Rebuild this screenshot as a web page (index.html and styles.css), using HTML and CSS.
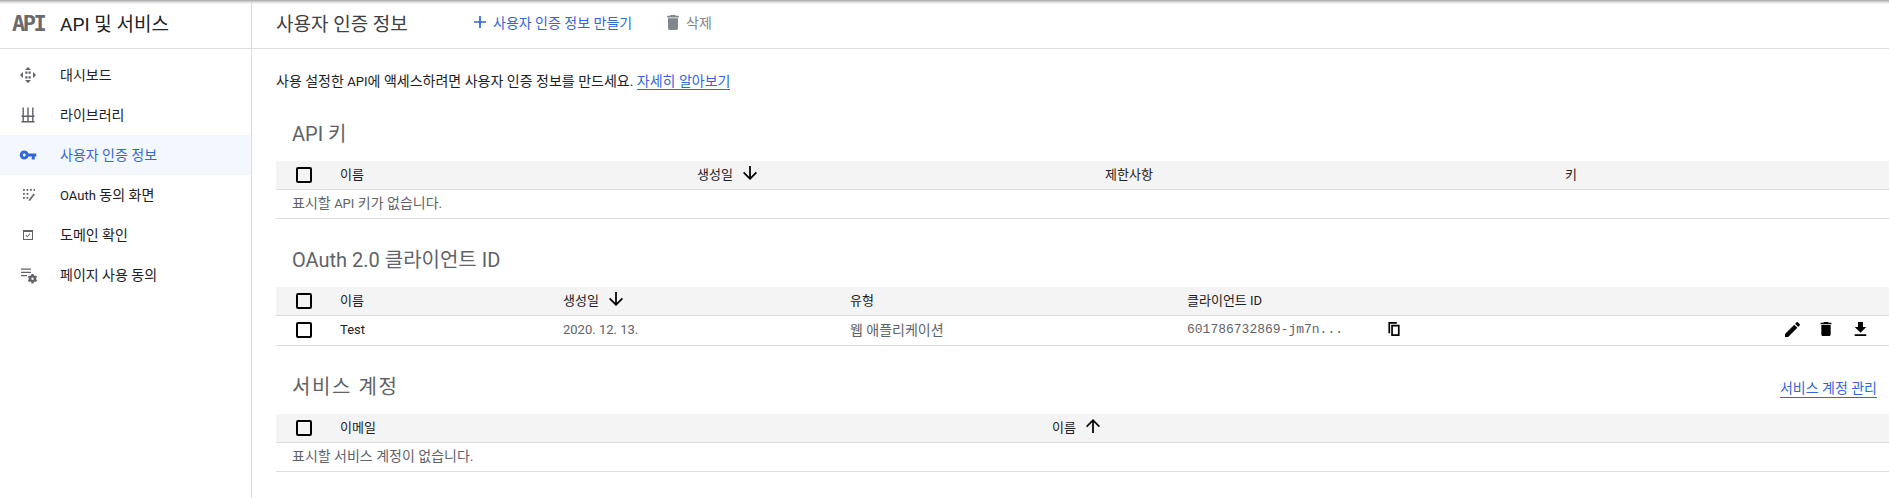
FILE: index.html
```html
<!doctype html>
<html lang="ko">

<head>
    <meta charset="utf-8">
    <title>사용자 인증 정보</title>
    <link rel="stylesheet" href="styles.css">
</head>

<body>
<!--Shadow from the bar above the page-->
<div class="topShade"></div>

<!--Left menu-->
<div class="sidebar">
    <div class="brand">
        <span class="brandLogo">API</span>
        <span class="brandName">API 및 서비스</span>
    </div>
    <div class="nav">
        <div class="navItem">
            <svg class="navIcon" viewBox="0 0 18 18"><path d="M9 1l3 3H6zM9 17l-3-3h6zM1 9l3-3v6zM17 9l-3 3V6z"/><path d="M6.300 5.500h2.200v2.200H6.300zM9.500 5.500h2.200v2.200H9.500zM6.300 10.300h2.200v2.200H6.300zM9.500 10.300h2.200v2.200H9.500z"/></svg>
            <span>대시보드</span>
        </div>
        <div class="navItem">
            <svg class="navIcon" viewBox="0 0 18 18"><path d="M3.500 1.500h1.400v8H3.500zM8.300 1.500h1.400v8H8.300zM13.100 1.500h1.400v8h-1.400zM2.500 9.500h13v1.400h-13zM3.500 10.900h1.400v4H3.500zM8.300 10.900h1.400v4H8.300zM13.100 10.900h1.400v4h-1.400zM2.500 15h13v1.400h-13z"/></svg>
            <span>라이브러리</span>
        </div>
        <div class="navItem active">
            <svg class="navIcon" viewBox="0 0 24 24"><path d="M12.650 10C11.830 7.670 9.610 6 7 6c-3.310 0-6 2.690-6 6s2.690 6 6 6c2.610 0 4.830-1.670 5.650-4H17v4h4v-4h2v-4H12.650zM7 14c-1.100 0-2-.9-2-2s.9-2 2-2 2 .9 2 2-.9 2-2 2z"/></svg>
            <span>사용자 인증 정보</span>
        </div>
        <div class="navItem">
            <svg class="navIcon" viewBox="0 0 18 18"><path d="M4 3h1.800v1.800H4zM7.500 3h1.800v1.800H7.500zM11 3h1.800v1.800H11zM14.500 3h1.500v1.800h-1.500zM4 7h1.800v1.800H4zM7.500 7h1.800v1.800H7.500zM4 11h1.800v1.800H4zM7.500 11h1.800v1.800H7.500zM10 13.500l4.600-6 1.300 1-4.600 6-1.700.6z"/></svg>
            <span><span class="lat">OAuth</span> 동의 화면</span>
        </div>
        <div class="navItem">
            <svg class="navIcon" viewBox="0 0 18 18"><path d="M4 4h10v10H4zM5 6v7h8V6zM6.500 9.500l.7-.7 1.100 1.100 2.500-2.500.7.7-3.200 3.200z" fill-rule="evenodd"/></svg>
            <span>도메인 확인</span>
        </div>
        <div class="navItem">
            <svg class="navIcon" viewBox="0 0 18 18"><path d="M2 2.500h10v1.300H2zM2 5.700h10V7H2zM2 8.900h6v1.300H2zM12.500 8h2l.3 1.300 1.100.6 1.200-.4 1 1.700-1 .9v1.200l1 .9-1 1.700-1.200-.4-1.100.6-.3 1.300h-2l-.3-1.300-1.100-.6-1.200.4-1-1.700 1-.9v-1.200l-1-.9 1-1.700 1.200.4 1.100-.6zM13.500 11.500a1.200 1.200 0 1 0 0 2.400 1.200 1.200 0 0 0 0-2.400z" fill-rule="evenodd"/></svg>
            <span>페이지 사용 동의</span>
        </div>
    </div>
</div>

<div class="main">
    <!--Title and actions-->
    <div class="topBar">
        <span class="pageTitle">사용자 인증 정보</span>
        <span class="topBtn createBtn">
            <svg class="plusIcon" viewBox="5 5 14 14"><path d="M19 13h-6v6h-2v-6H5v-2h6V5h2v6h6v2z"/></svg>
            <span>사용자 인증 정보 만들기</span>
        </span>
        <span class="topBtn deleteBtn">
            <svg class="binIcon" viewBox="5 3 14 18"><path d="M6 19c0 1.100.9 2 2 2h8c1.100 0 2-.9 2-2V7H6v12zM19 4h-3.500l-1-1h-5l-1 1H5v2h14V4z"/></svg>
            <span>삭제</span>
        </span>
    </div>

    <div class="intro">사용 설정한 <span class="lat">API</span>에 액세스하려면 사용자 인증 정보를 만드세요. <span class="link">자세히 알아보기</span></div>

    <!--API keys-->
    <div class="secHead"><span class="secTitle">API 키</span></div>
    <div class="row head apiCols">
        <span class="check"></span>
        <span>이름</span>
        <span class="sortCell">생성일
            <svg class="sortIcon" viewBox="4 4 16 16"><path d="M20 12l-1.410-1.410L13 16.170V4h-2v12.170l-5.580-5.590L4 12l8 8 8-8z"/></svg>
        </span>
        <span>제한사항</span>
        <span>키</span>
    </div>
    <div class="row emptyRow"><span>표시할 <span class="lat">API</span> 키가 없습니다.</span></div>

    <!--OAuth clients-->
    <div class="secHead"><span class="secTitle">OAuth 2.0 클라이언트 ID</span></div>
    <div class="row head oauthCols">
        <span class="check"></span>
        <span>이름</span>
        <span class="sortCell">생성일
            <svg class="sortIcon" viewBox="4 4 16 16"><path d="M20 12l-1.410-1.410L13 16.170V4h-2v12.170l-5.580-5.590L4 12l8 8 8-8z"/></svg>
        </span>
        <span>유형</span>
        <span>클라이언트 ID</span>
        <span></span>
    </div>
    <div class="row dataRow oauthCols">
        <span class="check"></span>
        <span class="lat black">Test</span>
        <span class="lat">2020. 12. 13.</span>
        <span>웹 애플리케이션</span>
        <span class="mono">601786732869-jm7n...</span>
        <span class="iconCell">
            <svg class="copyIcon" viewBox="0 0 12 15"><path d="M0 0h9v1.800H1.800V12H0zM3 3h9v12H3zM4.800 4.800v8.400h5.400V4.800z" fill-rule="evenodd"/></svg>
            <span class="actions">
                <svg class="editIcon" viewBox="3 3 18 18"><path d="M3 17.250V21h3.750L17.810 9.940l-3.750-3.750L3 17.250zM20.710 7.040c.39-.39.39-1.020 0-1.410l-2.340-2.340c-.39-.39-1.020-.39-1.410 0l-1.830 1.830 3.750 3.750 1.830-1.830z"/></svg>
                <svg class="trashIcon" viewBox="5 3 14 18"><path d="M6 19c0 1.100.9 2 2 2h8c1.100 0 2-.9 2-2V7H6v12zM19 4h-3.500l-1-1h-5l-1 1H5v2h14V4z"/></svg>
                <svg class="saveIcon" viewBox="5 3 14 17"><path d="M19 9h-4V3H9v6H5l7 7 7-7zM5 18v2h14v-2H5z"/></svg>
            </span>
        </span>
    </div>

    <!--Service accounts-->
    <div class="secHead">
        <span class="secTitle wideTitle">서비스 계정</span>
        <span class="link manage">서비스 계정 관리</span>
    </div>
    <div class="row head serviceCols">
        <span class="check"></span>
        <span>이메일</span>
        <span class="sortCell">이름
            <svg class="sortIcon" viewBox="4 4 16 16"><path d="M4 12l1.410 1.410L11 7.830V20h2V7.830l5.580 5.590L20 12l-8-8-8 8z"/></svg>
        </span>
    </div>
    <div class="row emptyRow"><span>표시할 서비스 계정이 없습니다.</span></div>
</div>
</body>

</html>
```

FILE: styles.css
```css
html,body{margin:0; height:100%;}
body{display:flex; height:498px; overflow:hidden; background-color:white; color:#202124; font-family:Roboto,"Noto Sans CJK KR",sans-serif; font-size:14px;}
svg{display:block; fill:currentColor;}
.lat{font-size:13px;}
/*Grey edge at the very top*/
.topShade{position:absolute; left:0; top:0; right:0; height:4px; background:linear-gradient(#a8a8a8,#d8d8d8 50%,rgba(255,255,255,0));}

/*Left menu*/
.sidebar{width:251px; flex:none; border-right:1px solid #dadce0;}
.brand{display:flex; align-items:center; height:48px; border-bottom:1px solid #dadce0;}
.brandLogo{width:60px; padding:0 0 2px 12px; box-sizing:border-box; color:#6b6b6b; font-family:"DejaVu Sans Mono",monospace; font-weight:bold; font-size:22px; letter-spacing:-2.5px;}
.brandName{padding-bottom:4px; font-size:19px; color:#202124;}
.nav{padding-top:6px;}
.navItem{display:flex; align-items:center; height:40px; color:#202124;}
.navItem span{padding-bottom:2px;}
.navItem .lat{padding-bottom:0;}
.navIcon{width:18px; height:18px; margin:0 23px 0 19px; color:#5f6368;}
.active{background-color:#e8f0fe80; color:#3367d6;}
.active .navIcon{color:#3367d6;}

/*Main column*/
.main{flex:1; min-width:0; padding-left:24px;}
.topBar{display:flex; align-items:center; height:44px; margin-left:-24px; padding:0 0 4px 24px; border-bottom:1px solid #dadce0;}
.pageTitle{width:198px; font-size:19px; color:#3c4043;}
.topBtn{display:flex; align-items:center; gap:7px;}
.createBtn{width:193px; color:#3367d6;}
.deleteBtn{color:#80868b;}
.plusIcon{width:12px; height:12px;}
.binIcon{width:12px; height:15px;}
.intro{height:44px; padding-top:23px; box-sizing:border-box; line-height:18px; color:#202124;}
.link{color:#3367d6; border-bottom:1px solid #3367d6;}

/*Section headings*/
.secHead{display:flex; justify-content:space-between; align-items:center; height:68px; padding:24px 12px 10px 16px; box-sizing:border-box;}
.secTitle{font-size:20px; line-height:20px; color:#5f6368;}
.wideTitle{letter-spacing:1.6px;}

/*Table rows*/
.row{display:grid; align-items:center; height:29px; box-sizing:border-box; border-bottom:1px solid #dadce0;}
.head{background-color:#f4f4f4; font-size:13px;}
.head>span{margin-bottom:4px;}
.head>.check{margin-bottom:0;}
.dataRow{height:30px; color:#5f6368;}
.dataRow>span{margin-bottom:3px;}
.dataRow>.check{margin-bottom:1px;}
.emptyRow{display:flex; padding:0 0 4px 16px; color:#5f6368;}
.apiCols{grid-template-columns:64px 357px 408px 460px 1fr;}
.oauthCols{grid-template-columns:64px 223px 287px 337px 201px 1fr;}
.serviceCols{grid-template-columns:64px 712px 1fr;}
.check{width:16px; height:16px; margin-left:20px; box-sizing:border-box; border:2px solid black; border-radius:2px;}
.black{color:#202124;}
.mono{font-family:"Liberation Mono",monospace; font-size:13px; color:#5f6368;}
.sortCell{display:flex; align-items:center; gap:10px;}
.sortIcon{width:14px; height:14px; color:black;}

/*Icons at the end of the client row*/
.iconCell{display:flex; align-items:center; justify-content:space-between; padding-right:22px; color:black;}
.actions{display:flex; align-items:center;}
.copyIcon{width:12px; height:14px;}
.editIcon{width:15px; height:15px; margin-right:20px;}
.trashIcon{width:12px; height:14px; margin-right:22px;}
.saveIcon{width:13px; height:14px;}
```
